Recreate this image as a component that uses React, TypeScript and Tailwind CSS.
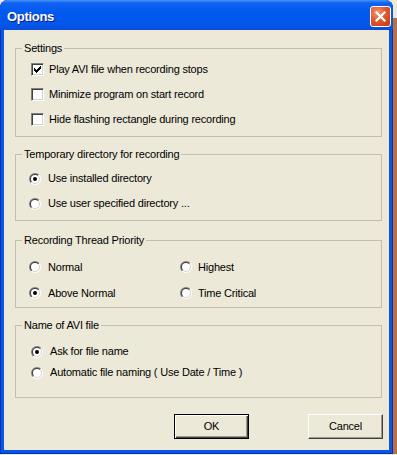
import { useId } from 'react';

const FONT = "font-['Liberation_Sans',Arial,sans-serif]";

function CheckBox({ checked }: { checked?: boolean }) {
    return (
        <span className="flex h-[13px] w-[13px] shrink-0 items-center justify-center border border-t-[#808080] border-l-[#808080] border-r-white border-b-white bg-white shadow-[inset_1px_1px_0_#404040,inset_-1px_-1px_0_#d4d0c8]">
            {checked && (
                <svg width="7" height="7" viewBox="0 0 7 7" shapeRendering="crispEdges">
                    <path
                        d="M6 0h1v1h-1z M5 1h2v1h-2z M0 2h1v1h-1z M4 2h3v1h-3z M0 3h2v1h-2z M3 3h3v1h-3z M0 4h5v1h-5z M1 5h3v1h-3z M2 6h1v1h-1z"
                        fill="#000"
                    />
                </svg>
            )}
        </span>
    );
}

function Radio({ checked }: { checked?: boolean }) {
    const id = useId().replace(/[^a-zA-Z0-9]/g, '');
    return (
        <svg width="12" height="12" viewBox="0 0 12 12" className="shrink-0">
            <defs>
                <linearGradient id={`o${id}`} x1="0" y1="0" x2="1" y2="1">
                    <stop offset="0.5" stopColor="#808080" />
                    <stop offset="0.5" stopColor="#ffffff" />
                </linearGradient>
                <linearGradient id={`i${id}`} x1="0" y1="0" x2="1" y2="1">
                    <stop offset="0.5" stopColor="#404040" />
                    <stop offset="0.5" stopColor="#d4d0c8" />
                </linearGradient>
            </defs>
            <circle cx="6" cy="6" r="6" fill={`url(#o${id})`} />
            <circle cx="6" cy="6" r="5" fill={`url(#i${id})`} />
            <circle cx="6" cy="6" r="4" fill="#fff" />
            {checked && <circle cx="6" cy="6" r="2" fill="#000" />}
        </svg>
    );
}

function CheckRow({ label, checked }: { label: string; checked?: boolean }) {
    return (
        <div className="flex h-[25px] items-center gap-[5px]">
            <CheckBox checked={checked} />
            <span>{label}</span>
        </div>
    );
}

function RadioRow({ label, checked, h = 'h-[25px]', gap = 'gap-[7px]' }: { label: string; checked?: boolean; h?: string; gap?: string }) {
    return (
        <div className={`flex items-center ${h} ${gap}`}>
            <Radio checked={checked} />
            <span>{label}</span>
        </div>
    );
}

function Group({ title, className, children }: { title: string; className: string; children: React.ReactNode }) {
    return (
        <fieldset className={`mx-[11px] w-[367px] border border-[#c2bfb0] ${className}`}>
            <legend className="ml-[6px] px-[2px] leading-[13px]">{title}</legend>
            {children}
        </fieldset>
    );
}

export default function App() {
    return (
        <div className={`flex h-[455px] w-[397px] bg-[#ece9d8] text-[11px] tracking-[-0.2px] text-black ${FONT}`}>
            <div className="flex h-[454px] w-[393px] flex-col overflow-hidden rounded-t-[8px] bg-[#0a56e4] shadow-[inset_1px_0_0_#0031b8,inset_-1px_0_0_#0031b8,inset_0_-1px_0_#0031b8]">
                {/* title bar */}
                <div className="flex h-[30px] shrink-0 items-start justify-between bg-[linear-gradient(to_bottom,#4a95fb_0px,#0e62f2_3px,#0058ee_14px,#0457ea_25px,#0a4cd8_30px)] pl-[7px] pr-[2px]">
                    <span className="mt-[9px] text-[13px] leading-[16px] font-bold tracking-[-0.3px] text-white [text-shadow:1px_1px_0_#0a1c8c]">
                        Options
                    </span>
                    <button className="mt-[6px] flex h-[21px] w-[21px] items-center justify-center rounded-[3px] border border-white bg-[radial-gradient(circle_at_35%_30%,#f09a78_0%,#e0582e_45%,#c23a12_100%)]">
                        <svg width="11" height="11" viewBox="0 0 11 11">
                            <path d="M1.5 1.5 L9.5 9.5 M9.5 1.5 L1.5 9.5" stroke="#fff" strokeWidth="2.2" strokeLinecap="square" />
                        </svg>
                    </button>
                </div>

                {/* client area */}
                <div className="mx-[4px] flex h-[420px] flex-col bg-[#ece9d8] pt-[12px]">
                    <Group title="Settings" className="h-[95px]">
                        <div className="pl-[15px] pt-[2px]">
                            <CheckRow label="Play AVI file when recording stops" checked />
                            <CheckRow label="Minimize program on start record" />
                            <CheckRow label="Hide flashing rectangle during recording" />
                        </div>
                    </Group>

                    <Group title="Temporary directory for recording" className="mt-[11px] h-[73px]">
                        <div className="pl-[13px] pt-[5px]">
                            <RadioRow label="Use installed directory" checked />
                            <RadioRow label="Use user specified directory ..." />
                        </div>
                    </Group>

                    <Group title="Recording Thread Priority" className="mt-[13px] h-[74px]">
                        <div className="grid grid-cols-[151px_1fr] pl-[13px] pt-[7px]">
                            <RadioRow label="Normal" h="h-[26px]" />
                            <RadioRow label="Highest" h="h-[26px]" gap="gap-[6px]" />
                            <RadioRow label="Above Normal" checked h="h-[26px]" />
                            <RadioRow label="Time Critical" h="h-[26px]" gap="gap-[6px]" />
                        </div>
                    </Group>

                    <Group title="Name of AVI file" className="mt-[11px] h-[79px]">
                        <div className="pl-[15px] pt-[9px]">
                            <RadioRow label="Ask for file name" checked h="h-[21px]" />
                            <RadioRow label="Automatic file naming ( Use Date / Time )" h="h-[21px]" />
                        </div>
                    </Group>

                    <div className="mt-[16px] flex gap-[59px] pl-[170px]">
                        <button className="h-[25px] w-[75px] border border-black bg-[#ece9d8] shadow-[inset_1px_1px_0_#fff,inset_-1px_-1px_0_#404040,inset_-2px_-2px_0_#9d9a8c]">
                            OK
                        </button>
                        <button className="h-[25px] w-[75px] border border-t-white border-l-white border-r-[#404040] border-b-[#404040] bg-[#ece9d8] shadow-[inset_-1px_-1px_0_#9d9a8c]">
                            Cancel
                        </button>
                    </div>
                </div>
            </div>
            <div className="mt-[18px] h-[436px] w-[4px] bg-[#b87045]" />
        </div>
    );
}
